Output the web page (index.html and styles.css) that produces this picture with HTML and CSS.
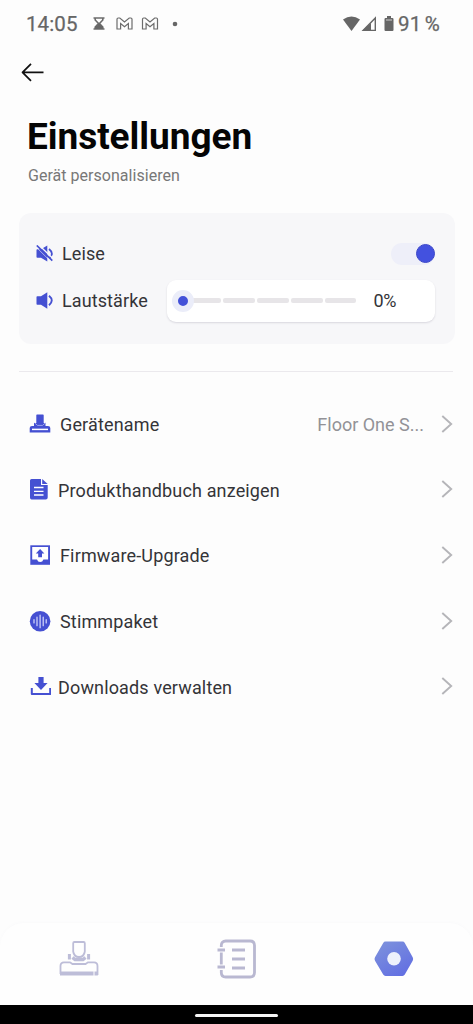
FILE: index.html
```html
<!DOCTYPE html>
<html lang="de">
<head>
<meta charset="utf-8">
<title>Einstellungen</title>
<link rel="stylesheet" href="styles.css">
</head>
<body>
<div class="screen">
  <header class="status">
    <span class="clock">14:05</span>
    <svg class="notices" width="86" height="16" viewBox="0 0 86 16" fill="none" stroke="#6c6c6c" stroke-width="1.2">
      <path d="M0.5 2H11.5M0.5 13H11.5M2.2 2V4L5.5 7.5L2.2 11V13M9.8 2V4L6.5 7.5L9.8 11V13" stroke-width="1.6"/>
      <path d="M2.2 13V11L6 7.6L9.8 11V13Z" fill="#666" stroke="none"/>
      <path id="mail" d="M24 3.2Q24 2 25.2 2H26.8L31.5 6L36.2 2H37.8Q39 2 39 3.2V13H35.4V7.5L31.5 10.8L27.6 7.5V13H24Z"/>
      <use href="#mail" x="25.5"/>
      <circle cx="82" cy="8" r="2.3" fill="#666" stroke="none"/>
    </svg>
    <svg class="signals" width="52" height="16" viewBox="0 0 52 16">
      <path d="M0 3.5Q8.5-2.5 17 3.5L8.5 15Z" fill="#666"/>
      <path d="M32.3 2V14.4H20.2Z" fill="none" stroke="#666" stroke-width="1.4"/>
      <path d="M28 7V14.5H19.5Z" fill="#666"/>
      <path d="M44 0H48V2H49.4Q50.5 2 50.5 3.2V14Q50.5 15 49.4 15H42.6Q41.5 15 41.5 14V3.2Q41.5 2 42.6 2H44Z" fill="#666"/>
      <path d="M43 4H49" stroke="#ccc" stroke-width="1"/>
    </svg>
    <span class="charge">91 %</span>
  </header>

  <nav class="back">
    <svg width="24" height="20" viewBox="0 0 24 20" fill="none" stroke="#111" stroke-width="1.7" stroke-linejoin="round"><path d="M22.5 10.3H1.5M10 1.8L1.5 10.3L10 18.8"/></svg>
  </nav>

  <h1 class="title">Einstellungen</h1>
  <p class="subtitle">Gerät personalisieren</p>

  <section class="sound">
    <div class="sound-row">
      <svg class="sound-icon" width="18" height="18" viewBox="0 0 18 18">
        <path d="M.5 5Q.5 4.2 1.3 4.2H5L11.3.5V16.5L5 12.8H1.3Q.5 12.8.5 12Z" fill="#4550d2"/>
        <path d="M13 4Q18.5 8.5 13.4 13" fill="none" stroke="#4550d2" stroke-width="1.8"/>
        <path d="M1.8-1L18 14.5" stroke="#f7f7f9" stroke-width="1.4"/>
        <path d="M.8.5L16.3 15.7" stroke="#4550d2" stroke-width="1.7"/>
        <path d="M0 1.9L15 16.8" stroke="#f7f7f9" stroke-width=".6"/>
      </svg>
      <span class="sound-label">Leise</span>
      <span class="switch"><span class="knob"></span></span>
    </div>
    <div class="sound-row volume">
      <svg class="sound-icon" width="18" height="18" viewBox="0 0 18 18">
        <path d="M.5 5Q.5 4.2 1.3 4.2H5L11.3.3V16.7L5 12.8H1.3Q.5 12.8.5 12Z" fill="#4550d2"/>
        <path d="M13 3.8Q18.5 8.5 13 13.2" fill="none" stroke="#4550d2" stroke-width="1.9"/>
      </svg>
      <span class="sound-label">Lautstärke</span>
      <div class="slider">
        <span class="thumb"></span>
        <div class="track"><i></i><i></i><i></i><i></i><i></i></div>
        <span class="percent">0%</span>
      </div>
    </div>
  </section>

  <main class="menu">
    <a class="item">
      <svg class="item-icon" width="22" height="22" viewBox="0 0 22 22">
        <path d="M7.3 1.2Q7.3.5 8 .5H14Q14.7.5 14.7 1.2V9H16.5V12H19Q21.3 12 21.3 14V18.5H.7V14Q.7 12 3 12H5V9H7.3Z" fill="#4550d2"/>
        <path d="M5.5 8.8L8.5 11.4H13.5L16.5 8.8" fill="none" stroke="#b5b9f2" stroke-width=".8"/>
        <path d="M3 15.4H19" stroke="#fff" stroke-width="1.5"/>
      </svg>
      <span class="label">Gerätename</span>
      <span class="value">Floor One S...</span>
      <svg class="chevron" width="12" height="20" viewBox="0 0 12 20"><path d="M1.3 2L10.2 10L1.3 18"/></svg>
    </a>
    <a class="item tight">
      <svg class="item-icon" width="22" height="22" viewBox="0 0 22 22">
        <path d="M2.5 0H12V6H18.7V18.5Q18.7 20.5 16.7 20.5H2.5Q1 20.5 1 18.5V1.5Q1 0 2.5 0Z" fill="#4550d2"/>
        <path d="M13.2 0L18.7 5H13.2Z" fill="#4550d2"/>
        <path d="M5 8.5H14.5M5 12.3H14.5M5 16H14.5" stroke="#fff" stroke-width="1.3"/>
      </svg>
      <span class="label">Produkthandbuch anzeigen</span>
      <svg class="chevron" width="12" height="20" viewBox="0 0 12 20"><path d="M1.3 2L10.2 10L1.3 18"/></svg>
    </a>
    <a class="item">
      <svg class="item-icon" width="22" height="22" viewBox="0 0 22 22">
        <path d="M1.3.3H21V19.8H1.3Z" fill="#4550d2"/>
        <path d="M3.2 2H19.1V14.5H14.4Q13.6 17 11.2 17T8 14.5H3.2Z" fill="#fff"/>
        <path d="M11.1 4L15.4 8.5H13V12.3H9.2V8.5H6.8Z" fill="#4550d2"/>
      </svg>
      <span class="label">Firmware-Upgrade</span>
      <svg class="chevron" width="12" height="20" viewBox="0 0 12 20"><path d="M1.3 2L10.2 10L1.3 18"/></svg>
    </a>
    <a class="item">
      <svg class="item-icon" width="22" height="22" viewBox="0 0 22 22">
        <circle cx="11.1" cy="10.3" r="10.3" fill="#4550d2"/>
        <path d="M5 8.7V12M8 6.2V14.7M11.1 4.2V16.7M14.2 6.2V14.7M17.2 8.7V12" stroke="#d8dafb" stroke-width="1.2" stroke-linecap="round"/>
      </svg>
      <span class="label">Stimmpaket</span>
      <svg class="chevron" width="12" height="20" viewBox="0 0 12 20"><path d="M1.3 2L10.2 10L1.3 18"/></svg>
    </a>
    <a class="item tight">
      <svg class="item-icon" width="22" height="22" viewBox="0 0 22 22">
        <path d="M9.4 1H14.6V7H18.6L12 14L5.4 7H9.4Z" fill="#4550d2"/>
        <path d="M2.8 12V18H21.2V12" fill="none" stroke="#4550d2" stroke-width="2" stroke-linejoin="round"/>
      </svg>
      <span class="label">Downloads verwalten</span>
      <svg class="chevron" width="12" height="20" viewBox="0 0 12 20"><path d="M1.3 2L10.2 10L1.3 18"/></svg>
    </a>
  </main>

  <nav class="tabs">
    <svg width="42" height="42" viewBox="0 0 42 42" fill="none" stroke="#bdbdd8" stroke-width="1.8">
      <path d="M15.2 5.2Q15.2 4 16.4 4H25.6Q26.8 4 26.8 5.2V13.5Q26 19 21 19T15.2 13.5Z"/>
      <path d="M11.4 16V21.5M30.6 16V21.5" stroke-width="3"/>
      <path d="M14.5 19.5L17 21.5H25L27.5 19.5" stroke-width="3.4"/>
      <path d="M2.5 36V28Q2.5 24.3 6 24.3H12L14.5 26H27.5L30 24.3H36Q39.5 24.3 39.5 28V37"/>
      <path d="M2 35.5H35.5M36.5 35.5H39.8" stroke-width="3.8"/>
    </svg>
    <svg width="42" height="42" viewBox="0 0 42 42" fill="none" stroke="#b9b8d1" stroke-width="2.8">
      <path d="M5.3 9V7.5Q5.3 3 9.8 3H34Q38.5 3 38.5 7.5V34.5Q38.5 39 34 39H9.8Q5.3 39 5.3 34.5V32M5.3 14.5V26.5"/>
      <path d="M1.5 12H9M1.5 29H9M16 12H29M16 21H29M16 30H29"/>
    </svg>
    <svg width="42" height="42" viewBox="0 0 42 42">
      <defs><linearGradient id="nut" x1="0" y1="0" x2=".7" y2="1"><stop stop-color="#7f94dc"/><stop offset="1" stop-color="#6370e2"/></linearGradient></defs>
      <path d="M12.5 3.5H29.5Q31 3.5 31.8 4.9L39.7 19.3Q40.6 21 39.7 22.7L31.8 36.6Q31 38 29.5 38H12.5Q11 38 10.2 36.6L2 22.7Q1 21 2 19.3L10.2 4.9Q11 3.5 12.5 3.5Z" fill="url(#nut)"/>
      <circle cx="21" cy="20.7" r="6.8" fill="#eef1fc"/>
    </svg>
  </nav>
  <footer class="gesture"><span></span></footer>
</div>
</body>
</html>
```

FILE: styles.css
```css
* { box-sizing: border-box; }
body { margin: 0; background: #fdfdfd; font-family: Roboto, "Liberation Sans", sans-serif; color: #343438; }
svg { display: block; flex: none; }
.screen { width: 473px; height: 1024px; display: flex; flex-direction: column; overflow: hidden; }
.status { display: flex; align-items: center; height: 48px; padding-left: 26px; color: #666; font-size: 20.5px; white-space: nowrap; }
.clock { width: 67px; letter-spacing: .1px; -webkit-text-stroke: .25px; }
.signals { margin-left: 164px; }
.charge { margin-left: 3px; letter-spacing: .2px; word-spacing: -2px; -webkit-text-stroke: .25px; }
.back { height: 64px; padding: 14px 0 0 21px; }
.title { margin: 0; padding-left: 27px; height: 49px; font-size: 37px; line-height: 49px; font-weight: 700; letter-spacing: -.05px; color: #050505; }
.subtitle { margin: 0; padding-left: 28px; height: 52px; line-height: 29px; font-size: 16px; letter-spacing: .03px; color: #777; }
.sound { margin: 0 18px 0 19px; height: 131px; padding: 17px 20.5px 0 17px; border-radius: 12px; background: #f7f7f9; }
.sound-row { display: flex; align-items: center; height: 47px; font-size: 18px; }
.sound-label { margin-left: 8px; letter-spacing: .1px; white-space: nowrap; }
.switch { display: flex; justify-content: flex-end; align-items: center; width: 44px; height: 22px; margin-left: auto; border-radius: 11px; background: #eeeff9; }
.knob { width: 19px; height: 19px; border-radius: 50%; background: #4351df; border: 1px solid #3e49c9; }
.slider { display: flex; align-items: center; width: 268px; height: 42px; margin-left: auto; padding-left: 5px; border-radius: 9px; background: #fff; box-shadow: 0 1px 2px #d8d7de; }
.thumb { position: relative; z-index: 1; width: 22px; height: 22px; border-radius: 50%; background: #4351d8; border: 6px solid #ebedf9; }
.track { display: flex; gap: 2px; width: 167px; margin-left: -4px; }
.track i { flex: 1; height: 5px; border-radius: 2px; background: #e7e5e8; }
.percent { margin-left: 17px; letter-spacing: -.4px; }
.menu { margin: 27px 20px 0 19px; padding-top: 20px; height: 552px; border-top: 1px solid #ebe9ed; }
.item { display: flex; align-items: center; height: 65.6px; padding-left: 10px; font-size: 18px; white-space: nowrap; }
.label { margin-left: 9px; letter-spacing: .15px; }
.tight .label { margin-left: 7px; }
.value { margin-left: auto; margin-right: 17px; color: #929297; }
.chevron { margin-left: auto; margin-right: 0; fill: none; stroke: #b5b5b9; stroke-width: 1.9; transform: translateY(-1px); }
.value + .chevron { margin-left: 0; }
.tabs { display: flex; justify-content: space-between; height: 82px; padding: 15px 58px 0; border-radius: 24px 24px 0 0; background: #fefefe; box-shadow: 0 -1px 3px #fafafb; }
.gesture { display: flex; justify-content: center; align-items: center; height: 19px; margin-top: auto; padding-top: 1px; background: #000; }
.gesture span { width: 83px; height: 3px; border-radius: 2px; background: #f5f5f5; }
```
